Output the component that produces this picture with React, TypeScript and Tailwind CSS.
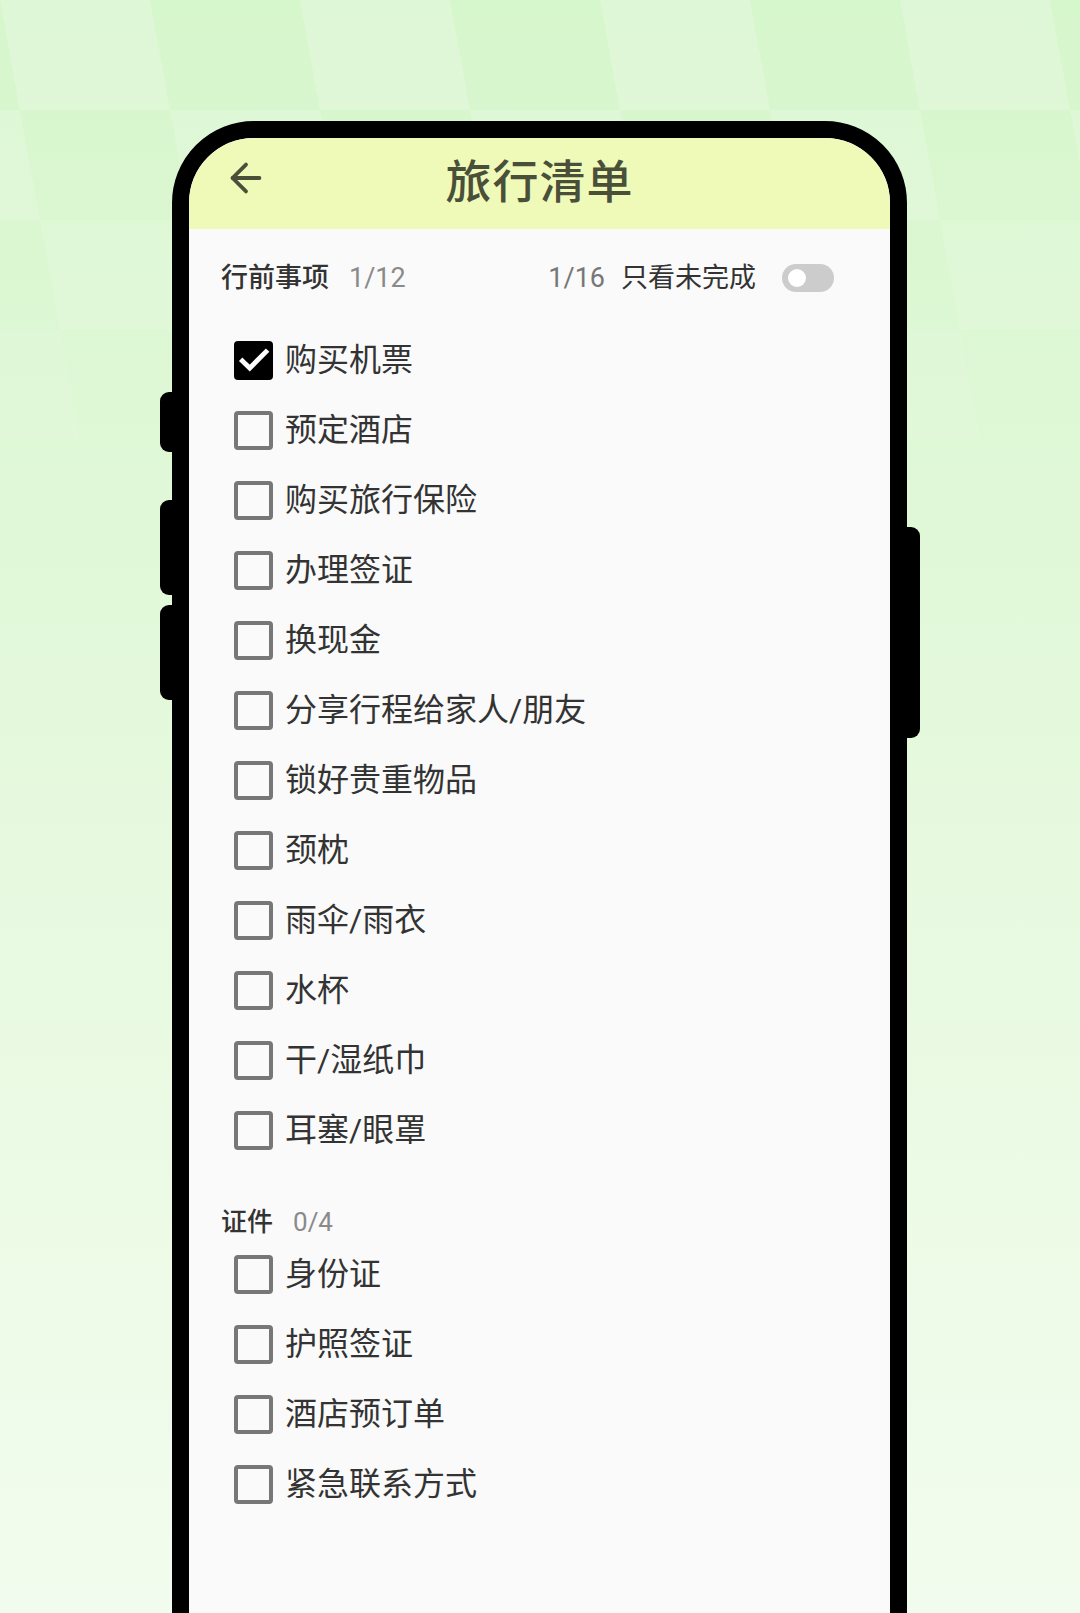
import { ArrowLeft } from 'lucide-react';

const beforeTrip = [
  { label: '购买机票', done: true },
  { label: '预定酒店', done: false },
  { label: '购买旅行保险', done: false },
  { label: '办理签证', done: false },
  { label: '换现金', done: false },
  { label: '分享行程给家人/朋友', done: false },
  { label: '锁好贵重物品', done: false },
  { label: '颈枕', done: false },
  { label: '雨伞/雨衣', done: false },
  { label: '水杯', done: false },
  { label: '干/湿纸巾', done: false },
  { label: '耳塞/眼罩', done: false },
];

const documents = [
  { label: '身份证', done: false },
  { label: '护照签证', done: false },
  { label: '酒店预订单', done: false },
  { label: '紧急联系方式', done: false },
];

const font = { fontFamily: 'Roboto, "Noto Sans CJK SC", sans-serif' };

function CheckBox({ checked }: { checked: boolean }) {
  if (checked) {
    return (
      <div className="w-[39px] h-[39px] rounded-[4px] bg-black flex items-center justify-center shrink-0">
        <svg viewBox="0 0 24 24" className="w-[34px] h-[34px]" fill="none">
          <path d="M3.8 12.6l5.2 5.1L20.4 6.2" stroke="white" strokeWidth="3.4" strokeLinecap="square" />
        </svg>
      </div>
    );
  }
  return <div className="w-[39px] h-[39px] rounded-[4px] border-[4px] border-[#777777] shrink-0" />;
}

function ChecklistRow({ label, done }: { label: string; done: boolean }) {
  return (
    <div className="h-[70px] flex items-center pl-[45px] gap-[12px]">
      <CheckBox checked={done} />
      <span className="text-[32px] text-[#333333] leading-none">{label}</span>
    </div>
  );
}

function Backdrop() {
  // faint tilted blocks across the top of the page background
  const blocks = [];
  for (let r = 0; r < 4; r++) {
    for (let c = -1; c < 8; c++) {
      if ((r + c) % 2 !== 0) continue;
      const x = c * 150 + r * 20;
      const y = r * 110;
      blocks.push(
        <polygon
          key={`${r}-${c}`}
          points={`${x},${y} ${x + 150},${y} ${x + 170},${y + 110} ${x + 20},${y + 110}`}
          fill="#ffffff"
          opacity={0.2 - r * 0.04}
        />
      );
    }
  }
  return (
    <svg className="absolute inset-0 w-full h-[460px]" viewBox="0 0 1080 460" preserveAspectRatio="none">
      {blocks}
    </svg>
  );
}

export default function App() {
  return (
    <div
      className="relative w-[1080px] h-[1613px] overflow-hidden bg-gradient-to-b from-[#d6f6cc] via-[#e6f9de] to-[#f2fcee]"
      style={font}
    >
      <Backdrop />

      <div className="relative w-[735px] ml-[172px] mt-[121px]">
        {/* side keys */}
        <div className="absolute left-[-12px] top-[271px] w-[20px] h-[60px] bg-black rounded-l-[9px]" />
        <div className="absolute left-[-12px] top-[379px] w-[20px] h-[95px] bg-black rounded-l-[9px]" />
        <div className="absolute left-[-12px] top-[484px] w-[20px] h-[95px] bg-black rounded-l-[9px]" />
        <div className="absolute right-[-13px] top-[406px] w-[20px] h-[211px] bg-black rounded-r-[9px]" />

        <div className="relative h-[1560px] border-[17px] border-black rounded-t-[82px] bg-[#fafafa] overflow-hidden">
          <header className="h-[91px] bg-[#effab9] flex items-center relative">
            <ArrowLeft className="absolute left-[34px] top-[17px] w-[46px] h-[46px] text-[#4a4f3a]" strokeWidth={2} />
            <h1 className="w-full text-center text-[46px] font-medium text-[#4a4f3a] leading-none tracking-[1px] mb-[4px]">
              旅行清单
            </h1>
          </header>

          <div className="pl-[32px] pr-[56px] mt-[24px] h-[50px] flex items-center">
            <span className="text-[27px] text-[#333333] font-medium">行前事项</span>
            <span className="text-[27px] text-[#8a8a8a] ml-[20px]">1/12</span>
            <span className="ml-auto text-[27px] text-[#777777]">1/16</span>
            <span className="text-[27px] text-[#333333] ml-[16px]">只看未完成</span>
            <div className="ml-[26px] w-[52px] h-[28px] rounded-full bg-[#cccccc] flex items-center pl-[6px]">
              <div className="w-[18px] h-[18px] rounded-full bg-white" />
            </div>
          </div>

          <div className="mt-[22px]">
            {beforeTrip.map((item) => (
              <ChecklistRow key={item.label} {...item} />
            ))}
          </div>

          <div className="pl-[32px] mt-[40px] h-[34px] flex items-center">
            <span className="text-[26px] text-[#333333] font-medium">证件</span>
            <span className="text-[26px] text-[#8a8a8a] ml-[20px]">0/4</span>
          </div>

          <div>
            {documents.map((item) => (
              <ChecklistRow key={item.label} {...item} />
            ))}
          </div>
        </div>
      </div>
    </div>
  );
}
